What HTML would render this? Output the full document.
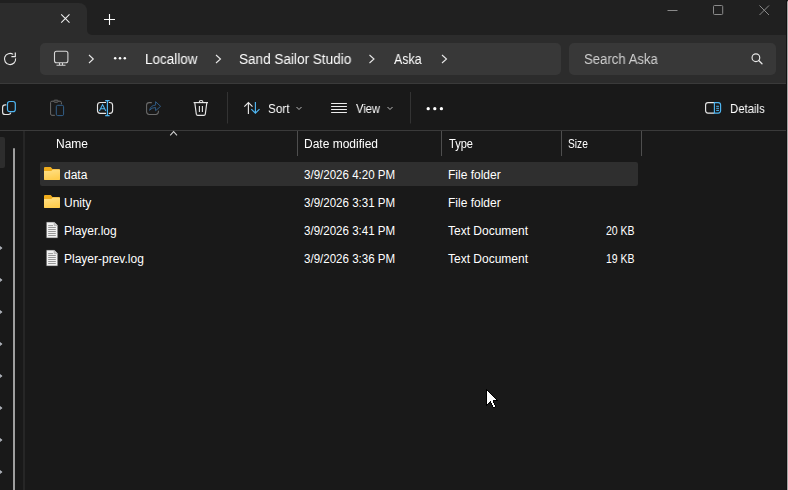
<!DOCTYPE html>
<html><head><meta charset="utf-8">
<style>
*{margin:0;padding:0;box-sizing:border-box}
html,body{width:788px;height:490px;overflow:hidden;background:#191919;font-family:"Liberation Sans",sans-serif;color:#fff}
.abs{position:absolute}
#tabstrip{left:0;top:0;width:788px;height:35px;background:#202020}
#tab{left:0;top:3px;width:87px;height:32px;background:#2c2c2c;border-top-right-radius:8px}
#tabcurve{left:87px;top:30px;width:5px;height:5px;background:#2c2c2c}
#tabcurve::after{content:"";position:absolute;left:0;top:0;width:5px;height:5px;background:#202020;border-bottom-left-radius:5px}
#addrrow{left:0;top:35px;width:788px;height:48px;background:#2c2c2c}
#addrline{left:0;top:83px;width:788px;height:1px;background:#3a3a3a}
#addr{left:40px;top:43px;width:521px;height:32px;background:#383838;border-radius:5px}
#search{left:569px;top:43px;width:207px;height:32px;background:#383838;border-radius:5px}
.t14{font-size:14px;line-height:16px;white-space:nowrap;will-change:transform}
.t13{font-size:13px;line-height:15px;white-space:nowrap;will-change:transform}
.t12{font-size:12px;line-height:14px;white-space:nowrap}
#content{left:0;top:131px;width:788px;height:359px;background:#191919}
#topline{left:0;top:130px;width:788px;height:1px;background:#3a3a3a}
#navdiv{left:23px;top:131px;width:2px;height:359px;background:#262626}
#navsel{left:0;top:137px;width:5px;height:31px;background:#2d2d2d;border-radius:0 2px 2px 0}
#scroll{left:13px;top:148px;width:2px;height:342px;background:#9e9e9e;border-radius:1px 1px 0 0}
.coldiv{top:131px;width:1px;height:25px;background:#4e4e4e}
#selrow{left:40px;top:162px;width:598px;height:24px;background:#2f2f2f;border-radius:2px}
.hdr{color:#fff}
.cell{color:#fff}
.sep{top:92px;width:1px;height:32px;background:#333}
svg{position:absolute;overflow:visible}
</style></head><body>
<div id="tabstrip" class="abs"></div>
<div id="tab" class="abs"></div>
<div id="tabcurve" class="abs"></div>
<!-- tab close x -->
<svg style="left:0;top:0" width="1" height="1"><path d="M61.2 14.4L69.5 22.7M69.5 14.4L61.2 22.7" stroke="#f0f0f0" stroke-width="1.05"/></svg>
<!-- plus -->
<svg style="left:104px;top:14px" width="11" height="11" viewBox="0 0 11 11"><path d="M5.5 0V11M0 5.5H11" stroke="#fff" stroke-width="1.1"/></svg>
<!-- window controls -->
<svg style="left:667px;top:5px" width="11" height="11" viewBox="0 0 11 11"><path d="M0.5 5.5H10.5" stroke="#8a8a8a" stroke-width="1"/></svg>
<svg style="left:713px;top:5px" width="11" height="11" viewBox="0 0 11 11"><rect x="0.5" y="0.5" width="9.2" height="9" rx="1" fill="none" stroke="#8a8a8a" stroke-width="1"/></svg>
<svg style="left:759px;top:5px" width="11" height="11" viewBox="0 0 11 11"><path d="M0.5 0.5L10 10M10 0.5L0.5 10" stroke="#8a8a8a" stroke-width="1"/></svg>

<div id="addrrow" class="abs"></div>
<div id="addrline" class="abs"></div>
<div id="addr" class="abs"></div>
<div id="search" class="abs"></div>


<!-- refresh -->
<svg style="left:0;top:0" width="1" height="1"><path d="M15.6 58.4A5.6 5.6 0 1 1 13.2 54.4" fill="none" stroke="#e8e8e8" stroke-width="1.1"/><path d="M15.3 52.6V56.6H11.4" fill="none" stroke="#e8e8e8" stroke-width="1.2"/></svg>
<!-- monitor -->
<svg style="left:0;top:0" width="1" height="1"><rect x="54.5" y="51.3" width="13.4" height="11.4" rx="2" fill="none" stroke="#d6d6d6" stroke-width="1.1"/><path d="M56.5 65.3H65.5M59.5 63V65M62.5 63V65" fill="none" stroke="#d6d6d6" stroke-width="1.1"/></svg>
<!-- chevrons -->
<svg style="left:0;top:0" width="1" height="1">
<path d="M89 55L93.3 59L89 63" fill="none" stroke="#e8e8e8" stroke-width="1.1"/>
<path d="M216 55L220.5 59L216 63" fill="none" stroke="#e8e8e8" stroke-width="1.1"/>
<path d="M369.5 55L374 59L369.5 63" fill="none" stroke="#e8e8e8" stroke-width="1.1"/>
<path d="M442 55L446.5 59L442 63" fill="none" stroke="#e8e8e8" stroke-width="1.1"/>
<circle cx="115.2" cy="58.2" r="1.25" fill="#fff"/><circle cx="120" cy="58.2" r="1.25" fill="#fff"/><circle cx="124.8" cy="58.2" r="1.25" fill="#fff"/>
</svg>
<div class="abs t14" style="left:144.5px;top:51px;color:#fff;transform:scaleX(0.965);transform-origin:0 0">Locallow</div>
<div class="abs t14" style="left:239px;top:51px;color:#fff;transform:scaleX(0.968);transform-origin:0 0">Sand Sailor Studio</div>
<div class="abs t14" style="left:393.5px;top:51px;color:#fff;transform:scaleX(0.89);transform-origin:0 0">Aska</div>
<div class="abs t14" style="left:584px;top:51px;color:#d0d0d0;transform:scaleX(0.94);transform-origin:0 0">Search Aska</div>
<!-- search icon -->
<svg style="left:0;top:0" width="1" height="1"><circle cx="755.9" cy="57.7" r="3.85" fill="none" stroke="#e8e8e8" stroke-width="1.15"/><path d="M758.7 60.5L762 63.8" stroke="#e8e8e8" stroke-width="1.3" stroke-linecap="round"/></svg>


<!-- TOOLBAR -->
<svg style="left:0;top:0" width="1" height="1" fill="none" stroke-width="1.15">
<!-- copy -->
<path d="M6.3 104.9H5.2Q2.6 104.9 2.6 107.5V111.9Q2.6 114.5 5.2 114.5H8.4Q10.4 114.5 10.9 112.6" stroke="#e6e6e6"/>
<rect x="7.5" y="101.5" width="7.8" height="10.1" rx="2.2" stroke="#4fb6f2" stroke-width="1.2"/>
<!-- paste disabled -->
<path d="M54.9 115.3H51.9Q50.6 115.3 50.6 114V102.5Q50.6 101.2 51.9 101.2H53.8M58.2 101.2H60.1Q61.4 101.2 61.4 102.5V104.3" stroke="#6c6c6c" stroke-width="1"/>
<rect x="53.9" y="100.2" width="4.2" height="2" rx="0.8" stroke="#6c6c6c" stroke-width="1"/>
<rect x="56.3" y="105.3" width="7.3" height="10.3" rx="1.4" stroke="#33608a" stroke-width="1"/>
<!-- rename -->
<path d="M106 102.5H100.3Q97.5 102.5 97.5 105.3V110.6Q97.5 113.4 100.3 113.4H106M108.8 102.5H109.8Q112.6 102.5 112.6 105.3V110.6Q112.6 113.4 109.8 113.4H108.8" stroke="#e6e6e6"/>
<path d="M107.4 100.6V115.6M105.2 100.6H109.6M105.2 115.6H109.6" stroke="#4fb6f2" stroke-width="1.2"/>
<path d="M99.4 110.9L102.6 104.6L105.8 110.9M100.5 108.8H104.7" stroke="#4fb6f2" stroke-width="1.1"/>
<!-- share disabled -->
<path d="M151.8 102.6H149.2Q146.6 102.6 146.6 105.2V111.8Q146.6 114.4 149.2 114.4H155.8Q158.4 114.4 158.4 111.8V110.8" stroke="#6c6c6c" stroke-width="1.05"/>
<path d="M149.6 110.3Q150.6 105.3 155.6 105.1V101.7L160.6 106.3L155.6 110.7V107.5Q151.5 107.5 149.6 110.3Z" stroke="#305c86" stroke-width="1" stroke-linejoin="round"/>
<!-- delete -->
<path d="M193.6 102.6H208" stroke="#e6e6e6" stroke-width="1.2"/>
<path d="M199.2 102.4Q199.2 100.5 201.1 100.5Q203 100.5 203 102.4" stroke="#e6e6e6" stroke-width="1.1"/>
<path d="M194.8 102.9L196.3 114.2Q196.5 115.4 197.7 115.4H203.9Q205.1 115.4 205.3 114.2L206.8 102.9" stroke="#e6e6e6" stroke-width="1.15"/>
<path d="M199.4 106V112M202.4 106V112" stroke="#e6e6e6" stroke-width="1.1"/>
<!-- sort -->
<path d="M248.4 102.6V113.9M244.3 106.7L248.4 102.6L252.5 106.7" stroke="#e6e6e6" stroke-width="1.15"/>
<path d="M255.4 102.1V113.2M251.3 109.1L255.4 113.2L259.5 109.1" stroke="#4fb6f2" stroke-width="1.15"/>
<path d="M296.5 107L299 109.5L301.5 107" stroke="#bdbdbd" stroke-width="1"/>
<!-- view -->
<path d="M331.5 103.5H346.5M331.5 106.5H346.5M331.5 109.5H346.5M331.5 112.5H346.5" stroke="#ececec" stroke-width="1.05" stroke-linecap="round"/>
<path d="M387.5 107L390 109.5L392.5 107" stroke="#bdbdbd" stroke-width="1"/>
<!-- separators -->
<path d="M227.5 92V123.5M410.5 92V123.5" stroke="#333333" stroke-width="1"/>
<!-- details -->
<path d="M714.4 102.6H708Q705.6 102.6 705.6 105V110.6Q705.6 113.1 708 113.1H714.4" stroke="#e6e6e6" stroke-width="1.15"/>
<path d="M714.4 102.6H718.2Q720.6 102.6 720.6 105V110.6Q720.6 113.1 718.2 113.1H714.4V102.6Z" stroke="#4fb6f2" stroke-width="1.15"/>
<path d="M716.6 106.3H718.6M716.6 108.3H718.6M716.6 110.4H718.6" stroke="#4fb6f2" stroke-width="1" stroke-linecap="round"/>
</svg>
<svg style="left:0;top:0" width="1" height="1"><circle cx="428.2" cy="108.7" r="1.65" fill="#fff"/><circle cx="434.8" cy="108.7" r="1.65" fill="#fff"/><circle cx="441.4" cy="108.7" r="1.65" fill="#fff"/></svg>
<div class="abs t13" style="left:268px;top:101px;color:#fff;transform:scaleX(0.9);transform-origin:0 0">Sort</div>
<div class="abs t13" style="left:355.5px;top:101px;color:#fff;transform:scaleX(0.86);transform-origin:0 0">View</div>
<div class="abs t13" style="left:729.5px;top:101px;color:#fff;transform:scaleX(0.875);transform-origin:0 0">Details</div>

<div id="topline" class="abs"></div>
<div id="navsel" class="abs"></div>
<div id="scroll" class="abs"></div>
<div id="navdiv" class="abs"></div>
<div id="selrow" class="abs"></div>

<!-- LIST HEADER -->
<div class="abs coldiv" style="left:297px"></div>
<div class="abs coldiv" style="left:441px"></div>
<div class="abs coldiv" style="left:561px"></div>
<div class="abs coldiv" style="left:641px"></div>
<svg style="left:0;top:0" width="1" height="1"><path d="M170.2 135.3L173.6 131.6L177 135.3" fill="none" stroke="#d0d0d0" stroke-width="1.05"/></svg>
<div class="abs t12" style="left:56px;top:137px">Name</div>
<div class="abs t12" style="left:304px;top:137px">Date modified</div>
<div class="abs t12" style="left:448.5px;top:137px;transform-origin:0 0;transform:scaleX(0.92)">Type</div>
<div class="abs t12" style="left:568px;top:137px;transform-origin:0 0;transform:scaleX(0.85)">Size</div>
<!-- ROWS -->
<div class="abs t12" style="left:64px;top:168px">data</div>
<div class="abs t12" style="left:304px;top:168px;transform-origin:0 0;transform:scaleX(0.962)">3/9/2026 4:20 PM</div>
<div class="abs t12" style="left:448px;top:168px">File folder</div>
<div class="abs t12" style="left:64px;top:196px">Unity</div>
<div class="abs t12" style="left:304px;top:196px;transform-origin:0 0;transform:scaleX(0.962)">3/9/2026 3:31 PM</div>
<div class="abs t12" style="left:448px;top:196px">File folder</div>
<div class="abs t12" style="left:64px;top:224px">Player.log</div>
<div class="abs t12" style="left:304px;top:224px;transform-origin:0 0;transform:scaleX(0.962)">3/9/2026 3:41 PM</div>
<div class="abs t12" style="left:448px;top:224px">Text Document</div>
<div class="abs t12" style="left:605.5px;top:224px;transform-origin:0 0;transform:scaleX(0.876)">20 KB</div>
<div class="abs t12" style="left:64px;top:252px">Player-prev.log</div>
<div class="abs t12" style="left:304px;top:252px;transform-origin:0 0;transform:scaleX(0.962)">3/9/2026 3:36 PM</div>
<div class="abs t12" style="left:448px;top:252px">Text Document</div>
<div class="abs t12" style="left:605.5px;top:252px;transform-origin:0 0;transform:scaleX(0.876)">19 KB</div>

<svg width="0" height="0" style="position:absolute"><defs><linearGradient id="fg" x1="0" y1="0" x2="0.3" y2="1"><stop offset="0" stop-color="#FFE18A"/><stop offset="1" stop-color="#FFCD4E"/></linearGradient></defs></svg><svg style="left:0;top:0" width="1" height="1">
<path d="M44 168Q44 167 45 167H50.7L52.5 169H59Q60 169 60 170V179Q60 180 59 180H45Q44 180 44 179Z" fill="#EFAC1C"/>
<path d="M44 171.1H51.3L52.8 169.5H59.2Q60 169.7 60 170.5V179Q60 180 59 180H45Q44 180 44 179Z" fill="url(#fg)"/>
</svg><svg style="left:0;top:0" width="1" height="1">
<path d="M44 196Q44 195 45 195H50.7L52.5 197H59Q60 197 60 198V207Q60 208 59 208H45Q44 208 44 207Z" fill="#EFAC1C"/>
<path d="M44 199.1H51.3L52.8 197.5H59.2Q60 197.7 60 198.5V207Q60 208 59 208H45Q44 208 44 207Z" fill="url(#fg)"/>
</svg><svg style="left:0;top:0" width="1" height="1">
<path d="M46.3 222H54.2L57.8 225.6V238H46.3Z" fill="#f2f2f2" stroke="#3a3a3a" stroke-width="0.6"/>
<path d="M54.2 222V225.6H57.8" fill="#d0d0d0" stroke="#9a9a9a" stroke-width="0.6"/>
<path d="M48.2 225.6H53M48.2 227.5H55.8M48.2 229.5H55.8M48.2 231.5H55.8M48.2 233.5H55.8M48.2 235.5H55.8" stroke="#8c8c8c" stroke-width="0.9"/>
</svg><svg style="left:0;top:0" width="1" height="1">
<path d="M46.3 250H54.2L57.8 253.6V266H46.3Z" fill="#f2f2f2" stroke="#3a3a3a" stroke-width="0.6"/>
<path d="M54.2 250V253.6H57.8" fill="#d0d0d0" stroke="#9a9a9a" stroke-width="0.6"/>
<path d="M48.2 253.6H53M48.2 255.5H55.8M48.2 257.5H55.8M48.2 259.5H55.8M48.2 261.5H55.8M48.2 263.5H55.8" stroke="#8c8c8c" stroke-width="0.9"/>
</svg>
<!-- nav chevron tips -->
<svg style="left:0;top:0" width="1" height="1"><path d="M-3.5 244L1.5 248L-3.5 252" fill="none" stroke="#bfc3cc" stroke-width="1.2"/><path d="M-3.5 276L1.5 280L-3.5 284" fill="none" stroke="#bfc3cc" stroke-width="1.2"/><path d="M-3.5 308L1.5 312L-3.5 316" fill="none" stroke="#bfc3cc" stroke-width="1.2"/><path d="M-3.5 340L1.5 344L-3.5 348" fill="none" stroke="#bfc3cc" stroke-width="1.2"/><path d="M-3.5 372L1.5 376L-3.5 380" fill="none" stroke="#bfc3cc" stroke-width="1.2"/><path d="M-3.5 404L1.5 408L-3.5 412" fill="none" stroke="#bfc3cc" stroke-width="1.2"/><path d="M-3.5 436L1.5 440L-3.5 444" fill="none" stroke="#bfc3cc" stroke-width="1.2"/><path d="M-3.5 468L1.5 472L-3.5 476" fill="none" stroke="#bfc3cc" stroke-width="1.2"/></svg>
<!-- cursor -->
<svg style="left:0;top:0" width="1" height="1" shape-rendering="crispEdges"><rect x="486" y="389" width="1" height="1" fill="#000"/><rect x="486" y="390" width="1" height="1" fill="#000"/><rect x="487" y="390" width="1" height="1" fill="#000"/><rect x="486" y="391" width="1" height="1" fill="#000"/><rect x="487" y="391" width="1" height="1" fill="#fff"/><rect x="488" y="391" width="1" height="1" fill="#000"/><rect x="486" y="392" width="1" height="1" fill="#000"/><rect x="487" y="392" width="1" height="1" fill="#fff"/><rect x="488" y="392" width="1" height="1" fill="#fff"/><rect x="489" y="392" width="1" height="1" fill="#000"/><rect x="486" y="393" width="1" height="1" fill="#000"/><rect x="487" y="393" width="1" height="1" fill="#fff"/><rect x="488" y="393" width="1" height="1" fill="#fff"/><rect x="489" y="393" width="1" height="1" fill="#fff"/><rect x="490" y="393" width="1" height="1" fill="#000"/><rect x="486" y="394" width="1" height="1" fill="#000"/><rect x="487" y="394" width="1" height="1" fill="#fff"/><rect x="488" y="394" width="1" height="1" fill="#fff"/><rect x="489" y="394" width="1" height="1" fill="#fff"/><rect x="490" y="394" width="1" height="1" fill="#fff"/><rect x="491" y="394" width="1" height="1" fill="#000"/><rect x="486" y="395" width="1" height="1" fill="#000"/><rect x="487" y="395" width="1" height="1" fill="#fff"/><rect x="488" y="395" width="1" height="1" fill="#fff"/><rect x="489" y="395" width="1" height="1" fill="#fff"/><rect x="490" y="395" width="1" height="1" fill="#fff"/><rect x="491" y="395" width="1" height="1" fill="#fff"/><rect x="492" y="395" width="1" height="1" fill="#000"/><rect x="486" y="396" width="1" height="1" fill="#000"/><rect x="487" y="396" width="1" height="1" fill="#fff"/><rect x="488" y="396" width="1" height="1" fill="#fff"/><rect x="489" y="396" width="1" height="1" fill="#fff"/><rect x="490" y="396" width="1" height="1" fill="#fff"/><rect x="491" y="396" width="1" height="1" fill="#fff"/><rect x="492" y="396" width="1" height="1" fill="#fff"/><rect x="493" y="396" width="1" height="1" fill="#000"/><rect x="486" y="397" width="1" height="1" fill="#000"/><rect x="487" y="397" width="1" height="1" fill="#fff"/><rect x="488" y="397" width="1" height="1" fill="#fff"/><rect x="489" y="397" width="1" height="1" fill="#fff"/><rect x="490" y="397" width="1" height="1" fill="#fff"/><rect x="491" y="397" width="1" height="1" fill="#fff"/><rect x="492" y="397" width="1" height="1" fill="#fff"/><rect x="493" y="397" width="1" height="1" fill="#fff"/><rect x="494" y="397" width="1" height="1" fill="#000"/><rect x="486" y="398" width="1" height="1" fill="#000"/><rect x="487" y="398" width="1" height="1" fill="#fff"/><rect x="488" y="398" width="1" height="1" fill="#fff"/><rect x="489" y="398" width="1" height="1" fill="#fff"/><rect x="490" y="398" width="1" height="1" fill="#fff"/><rect x="491" y="398" width="1" height="1" fill="#fff"/><rect x="492" y="398" width="1" height="1" fill="#fff"/><rect x="493" y="398" width="1" height="1" fill="#fff"/><rect x="494" y="398" width="1" height="1" fill="#fff"/><rect x="495" y="398" width="1" height="1" fill="#000"/><rect x="486" y="399" width="1" height="1" fill="#000"/><rect x="487" y="399" width="1" height="1" fill="#fff"/><rect x="488" y="399" width="1" height="1" fill="#fff"/><rect x="489" y="399" width="1" height="1" fill="#fff"/><rect x="490" y="399" width="1" height="1" fill="#fff"/><rect x="491" y="399" width="1" height="1" fill="#fff"/><rect x="492" y="399" width="1" height="1" fill="#fff"/><rect x="493" y="399" width="1" height="1" fill="#fff"/><rect x="494" y="399" width="1" height="1" fill="#fff"/><rect x="495" y="399" width="1" height="1" fill="#fff"/><rect x="496" y="399" width="1" height="1" fill="#000"/><rect x="486" y="400" width="1" height="1" fill="#000"/><rect x="487" y="400" width="1" height="1" fill="#fff"/><rect x="488" y="400" width="1" height="1" fill="#fff"/><rect x="489" y="400" width="1" height="1" fill="#fff"/><rect x="490" y="400" width="1" height="1" fill="#fff"/><rect x="491" y="400" width="1" height="1" fill="#fff"/><rect x="492" y="400" width="1" height="1" fill="#fff"/><rect x="493" y="400" width="1" height="1" fill="#000"/><rect x="494" y="400" width="1" height="1" fill="#000"/><rect x="495" y="400" width="1" height="1" fill="#000"/><rect x="496" y="400" width="1" height="1" fill="#000"/><rect x="497" y="400" width="1" height="1" fill="#000"/><rect x="486" y="401" width="1" height="1" fill="#000"/><rect x="487" y="401" width="1" height="1" fill="#fff"/><rect x="488" y="401" width="1" height="1" fill="#fff"/><rect x="489" y="401" width="1" height="1" fill="#fff"/><rect x="490" y="401" width="1" height="1" fill="#000"/><rect x="491" y="401" width="1" height="1" fill="#fff"/><rect x="492" y="401" width="1" height="1" fill="#fff"/><rect x="493" y="401" width="1" height="1" fill="#000"/><rect x="486" y="402" width="1" height="1" fill="#000"/><rect x="487" y="402" width="1" height="1" fill="#fff"/><rect x="488" y="402" width="1" height="1" fill="#fff"/><rect x="489" y="402" width="1" height="1" fill="#000"/><rect x="490" y="402" width="1" height="1" fill="#000"/><rect x="491" y="402" width="1" height="1" fill="#fff"/><rect x="492" y="402" width="1" height="1" fill="#fff"/><rect x="493" y="402" width="1" height="1" fill="#000"/><rect x="486" y="403" width="1" height="1" fill="#000"/><rect x="487" y="403" width="1" height="1" fill="#fff"/><rect x="488" y="403" width="1" height="1" fill="#000"/><rect x="491" y="403" width="1" height="1" fill="#000"/><rect x="492" y="403" width="1" height="1" fill="#fff"/><rect x="493" y="403" width="1" height="1" fill="#fff"/><rect x="494" y="403" width="1" height="1" fill="#000"/><rect x="486" y="404" width="1" height="1" fill="#000"/><rect x="487" y="404" width="1" height="1" fill="#000"/><rect x="491" y="404" width="1" height="1" fill="#000"/><rect x="492" y="404" width="1" height="1" fill="#fff"/><rect x="493" y="404" width="1" height="1" fill="#fff"/><rect x="494" y="404" width="1" height="1" fill="#000"/><rect x="486" y="405" width="1" height="1" fill="#000"/><rect x="492" y="405" width="1" height="1" fill="#000"/><rect x="493" y="405" width="1" height="1" fill="#fff"/><rect x="494" y="405" width="1" height="1" fill="#fff"/><rect x="495" y="405" width="1" height="1" fill="#000"/><rect x="492" y="406" width="1" height="1" fill="#000"/><rect x="493" y="406" width="1" height="1" fill="#fff"/><rect x="494" y="406" width="1" height="1" fill="#fff"/><rect x="495" y="406" width="1" height="1" fill="#000"/><rect x="493" y="407" width="1" height="1" fill="#000"/><rect x="494" y="407" width="1" height="1" fill="#000"/></svg>

<div class="abs" style="left:786px;top:0;width:1px;height:490px;background:#121212"></div>
<div class="abs" style="left:787px;top:1px;width:1px;height:489px;background:#a5a5a5;border-top-right-radius:1px"></div>
</body></html>
